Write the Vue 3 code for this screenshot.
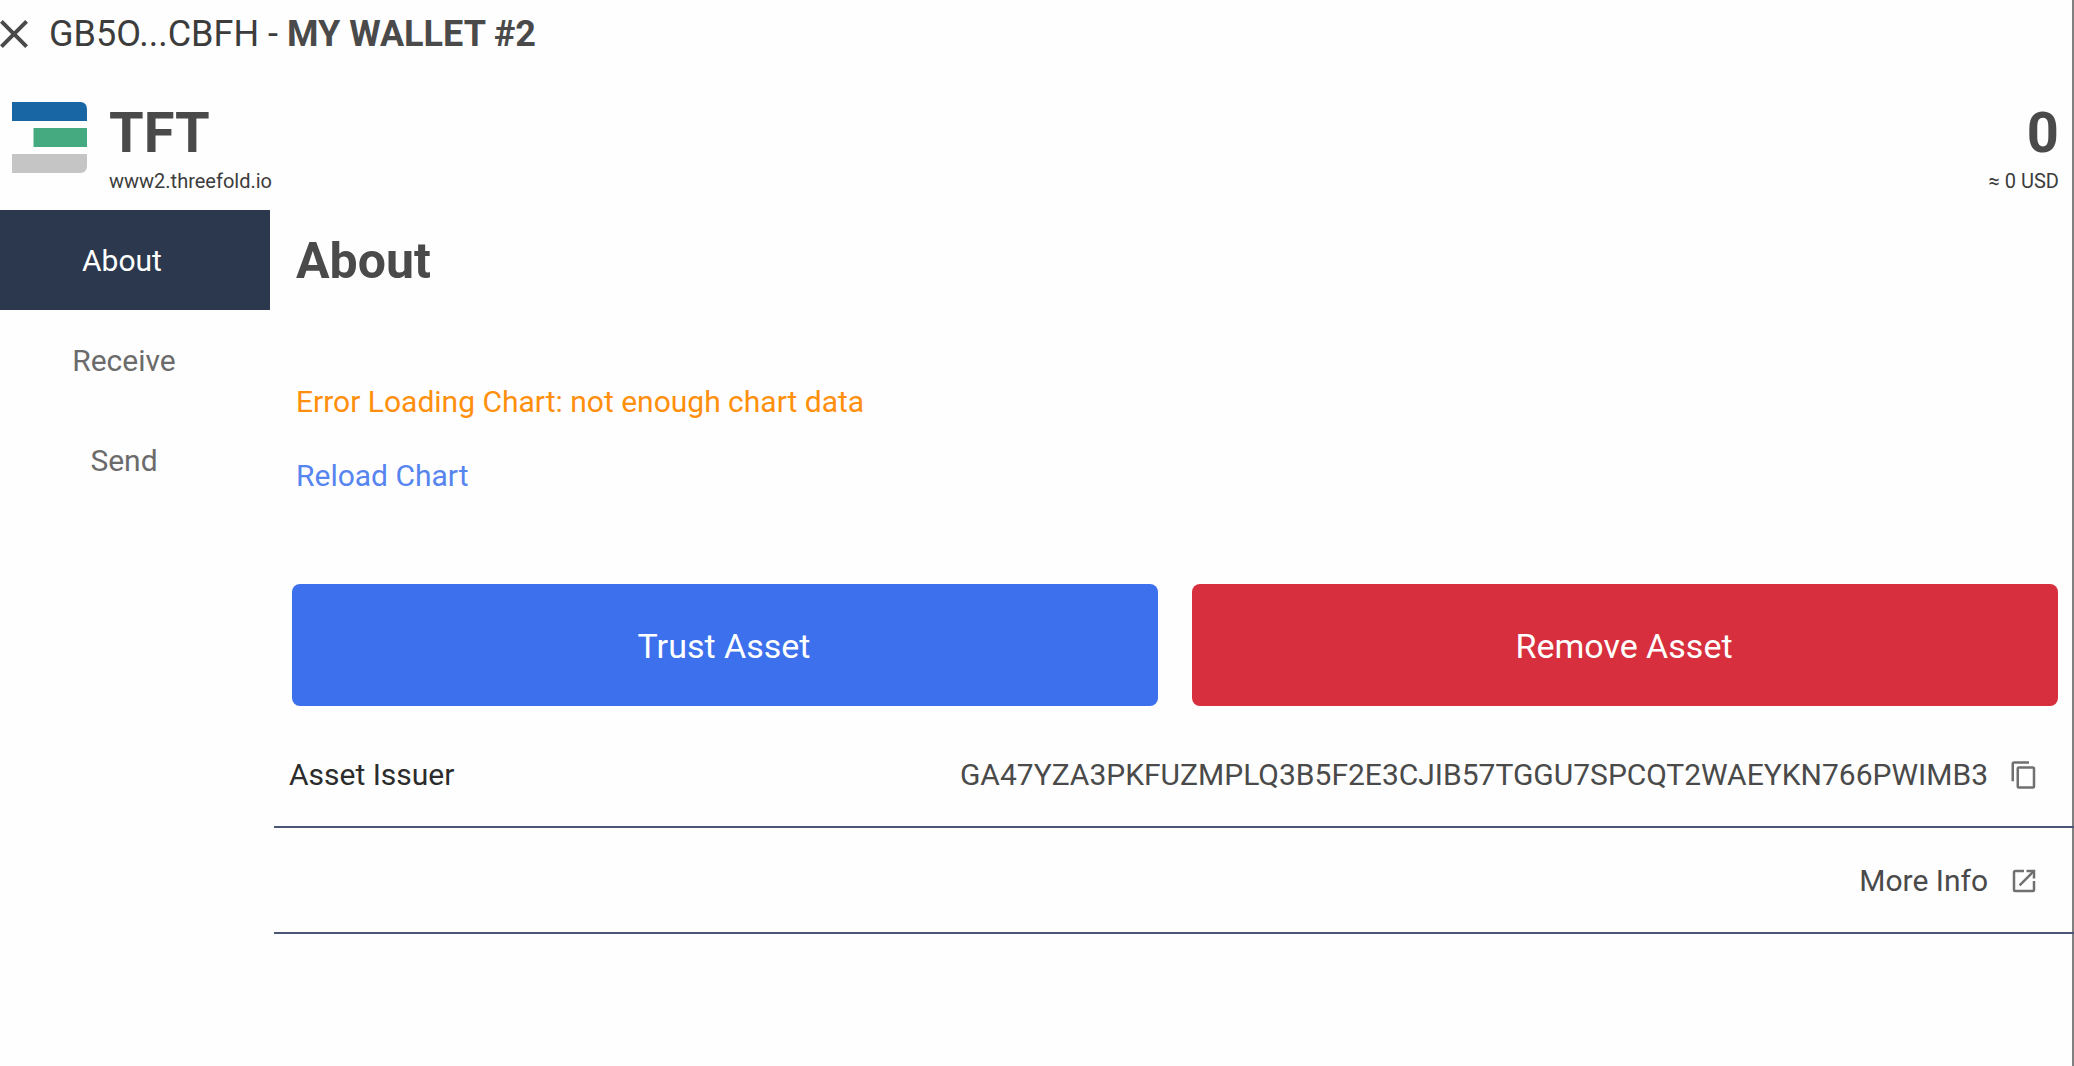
<script setup>
const tabs = ['About', 'Receive', 'Send']
const active = 'About'
</script>

<template>
  <div class="page">
    <header class="topbar">
      <button class="close" type="button" aria-label="Close">
        <svg viewBox="5 5 14 14" width="28" height="28" aria-hidden="true">
          <path fill="currentColor" d="M19,6.41L17.59,5L12,10.59L6.41,5L5,6.41L10.59,12L5,17.59L6.41,19L12,13.41L17.59,19L19,17.59L13.41,12L19,6.41Z" />
        </svg>
      </button>
      <div class="account">GB5O...CBFH - <strong>MY WALLET #2</strong></div>
    </header>

    <section class="asset">
      <svg class="logo" viewBox="0 0 75 71" width="75" height="71" aria-hidden="true">
        <path fill="#1966a5" d="M0 0H69Q75 1 75 7V19H0Z" />
        <path fill="#45aa80" d="M21.500 26H75V45H21.500Z" />
        <path fill="#c5c5c5" d="M0 52H75V64Q75 70 69 71H0Z" />
      </svg>
      <div class="identity">
        <div class="big">TFT</div>
        <div class="small">www2.threefold.io</div>
      </div>
      <div class="balance">
        <div class="big">0</div>
        <div class="small">≈ 0 USD</div>
      </div>
    </section>

    <div class="body">
      <nav class="tabs">
        <button v-for="tab in tabs" :key="tab" type="button" class="tab" :class="{ active: tab === active }">{{ tab }}</button>
      </nav>

      <main class="content">
        <h1>About</h1>
        <p class="error">Error Loading Chart: not enough chart data</p>
        <a class="reload" href="#">Reload Chart</a>

        <div class="actions">
          <button type="button" class="action trust">Trust Asset</button>
          <button type="button" class="action remove">Remove Asset</button>
        </div>

        <div class="row">
          <span class="label">Asset Issuer</span>
          <span class="value">GA47YZA3PKFUZMPLQ3B5F2E3CJIB57TGGU7SPCQT2WAEYKN766PWIMB3</span>
          <button class="icon" type="button" aria-label="Copy asset issuer">
            <svg viewBox="0 0 24 24" width="30" height="30" aria-hidden="true">
              <path fill="currentColor" d="M19,21H8V7H19M19,5H8A2,2 0 0,0 6,7V21A2,2 0 0,0 8,23H19A2,2 0 0,0 21,21V7A2,2 0 0,0 19,5M16,1H4A2,2 0 0,0 2,3V17H4V3H16V1Z" />
            </svg>
          </button>
        </div>
        <div class="row">
          <a class="value more" href="#">More Info
            <svg class="icon" viewBox="0 0 24 24" width="30" height="30" aria-hidden="true">
              <path fill="currentColor" d="M14,3V5H17.59L7.76,14.83L9.17,16.24L19,6.41V10H21V3M19,19H5V5H12V3H5C3.89,3 3,3.9 3,5V19A2,2 0 0,0 5,21H19A2,2 0 0,0 21,19V12H19V19Z" />
            </svg>
          </a>
        </div>
      </main>
    </div>
  </div>
</template>

<style>
body {
  margin: 0;
  background: #fefefe;
}
</style>

<style scoped>
.page {
  min-height: 100vh;
  font-family: Roboto, "Liberation Sans", sans-serif;
  font-size: 30px;
  line-height: 40px;
  color: #4a4a4a;
  box-shadow: inset -2px 0 #808080;
}
button {
  margin: 0;
  padding: 0;
  border: 0;
  background: none;
  font: inherit;
  color: inherit;
  cursor: pointer;
}
a {
  text-decoration: none;
}
svg {
  display: block;
}
.topbar {
  display: flex;
  align-items: center;
  gap: 21px;
  height: 67px;
}
.account {
  font-size: 36px;
  color: #3c3c3c;
}
.account strong {
  color: #4a4a4a;
}
.asset {
  display: flex;
  align-items: flex-start;
  padding: 35px 15px 15px 12px;
}
.identity {
  margin-left: 22px;
}
.balance {
  margin-left: auto;
  text-align: right;
}
.big {
  font-size: 56px;
  line-height: 62px;
  font-weight: 700;
}
.small {
  margin-top: 3px;
  font-size: 20px;
  line-height: 28px;
  color: #3c3c3c;
}
.body {
  display: flex;
}
.tabs {
  display: flex;
  flex-direction: column;
  width: 270px;
  flex: none;
}
.tab {
  height: 100px;
  padding: 2px 22px 0 0;
  color: #6b6b6b;
}
.tab.active {
  padding-right: 26px;
  background: #2b384e;
  color: #fff;
}
.content {
  flex: 1;
  min-width: 0;
  margin-left: 4px;
}
h1 {
  margin: 0;
  padding-left: 22px;
  font-size: 50px;
  line-height: 102px;
}
.error {
  margin: 70px 0 34px;
  padding-left: 22px;
  color: #ff8f0c;
}
.reload {
  display: block;
  width: max-content;
  padding-left: 22px;
  color: #5785f0;
}
.actions {
  display: flex;
  gap: 34px;
  margin: 88px 16px 16px 18px;
}
.action {
  flex: 1;
  height: 122px;
  padding: 2px 2px 0 0;
  border-radius: 8px;
  font-size: 34px;
  color: #fff;
}
.trust {
  background: #3c70ec;
}
.remove {
  background: #d82f3e;
}
.row {
  display: flex;
  align-items: center;
  box-sizing: border-box;
  height: 106px;
  padding: 2px 35px 0 15px;
  border-bottom: 2px solid #4a5578;
}
.label {
  color: #2c2c2c;
}
.value {
  margin-left: auto;
  color: #4a4a4a;
}
.more {
  display: flex;
  align-items: center;
}
.icon {
  margin-left: 21px;
  color: #707070;
}
</style>
